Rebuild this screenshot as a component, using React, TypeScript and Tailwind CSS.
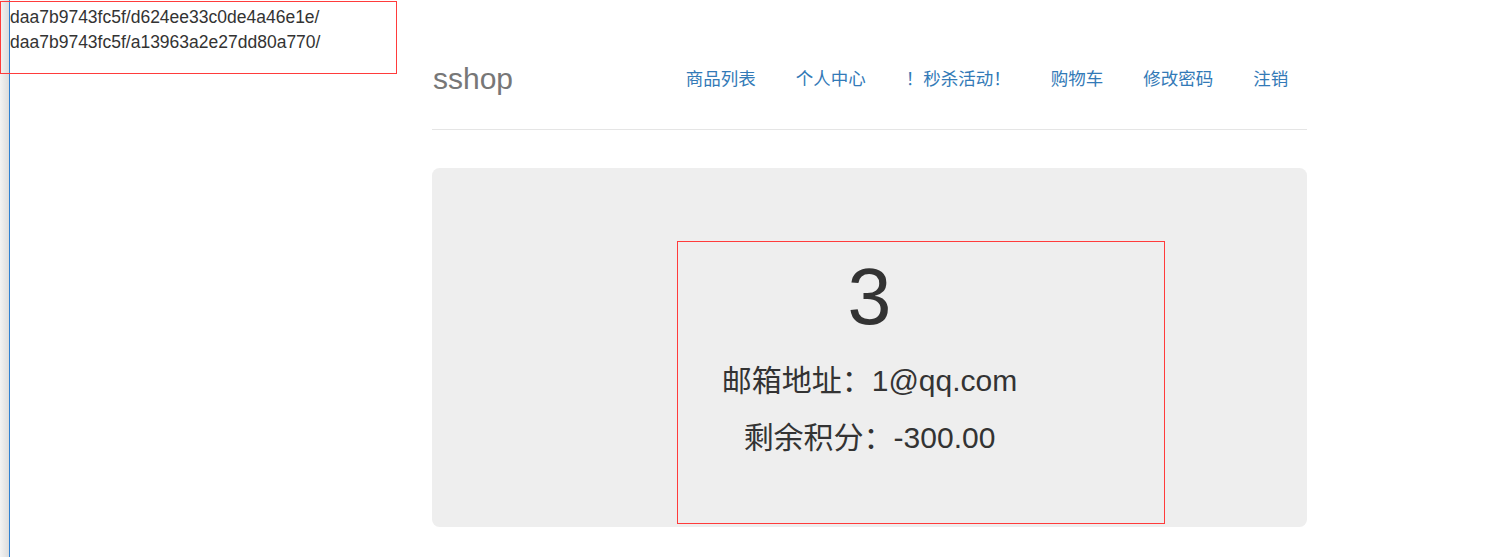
import React from "react";

const FONT = { fontFamily: '"Liberation Sans", "Noto Sans CJK SC", sans-serif' };

const links = ["商品列表", "个人中心", "！秒杀活动！", "购物车", "修改密码", "注销"];

export default function App() {
  return (
    <div className="relative flex min-h-[557px] bg-white text-[#333]" style={FONT}>
      <div className="w-[9px] shrink-0 bg-gradient-to-r from-[#f3f3f3] to-[#dcdcdc]" />
      <div className="w-px shrink-0 bg-[#2f80d1]" />

      <div className="absolute left-0 top-[1px] h-[73px] w-[397px] border border-[#ff3b3b] pl-[9px] pt-[3px] text-[17.5px] leading-[25px] text-[#333]">
        <div>daa7b9743fc5f/d624ee33c0de4a46e1e/</div>
        <div>daa7b9743fc5f/a13963a2e27dd80a770/</div>
      </div>

      <div className="flex-1">
        <div className="ml-[422px] w-[875px] pt-[54px]">
          <div className="flex items-center justify-between border-b border-[#e5e5e5] pb-[25px]">
            <h3 className="pl-[1px] text-[30px] leading-[50px] text-[#777]">sshop</h3>
            <ul className="flex">
              {links.map((l, i) => (
                <li key={l} className={i > 0 ? "ml-[2.5px]" : ""}>
                  <a className="block px-[18.75px] py-[12.5px] text-[17.5px] leading-[25px] text-[#337ab7]">
                    {l}
                  </a>
                </li>
              ))}
            </ul>
          </div>

          <div className="relative mt-[38px] h-[359px] rounded-[7.5px] bg-[#eeeeee] pt-[85.5px] text-center">
            <h1 className="text-[78.75px] leading-[1.1] text-[#333]">3</h1>
            <h3 className="mt-[24px] text-[30px] leading-[33px] text-[#333]">邮箱地址：1@qq.com</h3>
            <h3 className="mt-[24px] text-[30px] leading-[33px] text-[#333]">剩余积分：-300.00</h3>
            <div className="pointer-events-none absolute left-[245px] top-[73px] h-[283px] w-[488px] border border-[#ff3b3b]" />
          </div>
        </div>
      </div>
    </div>
  );
}
